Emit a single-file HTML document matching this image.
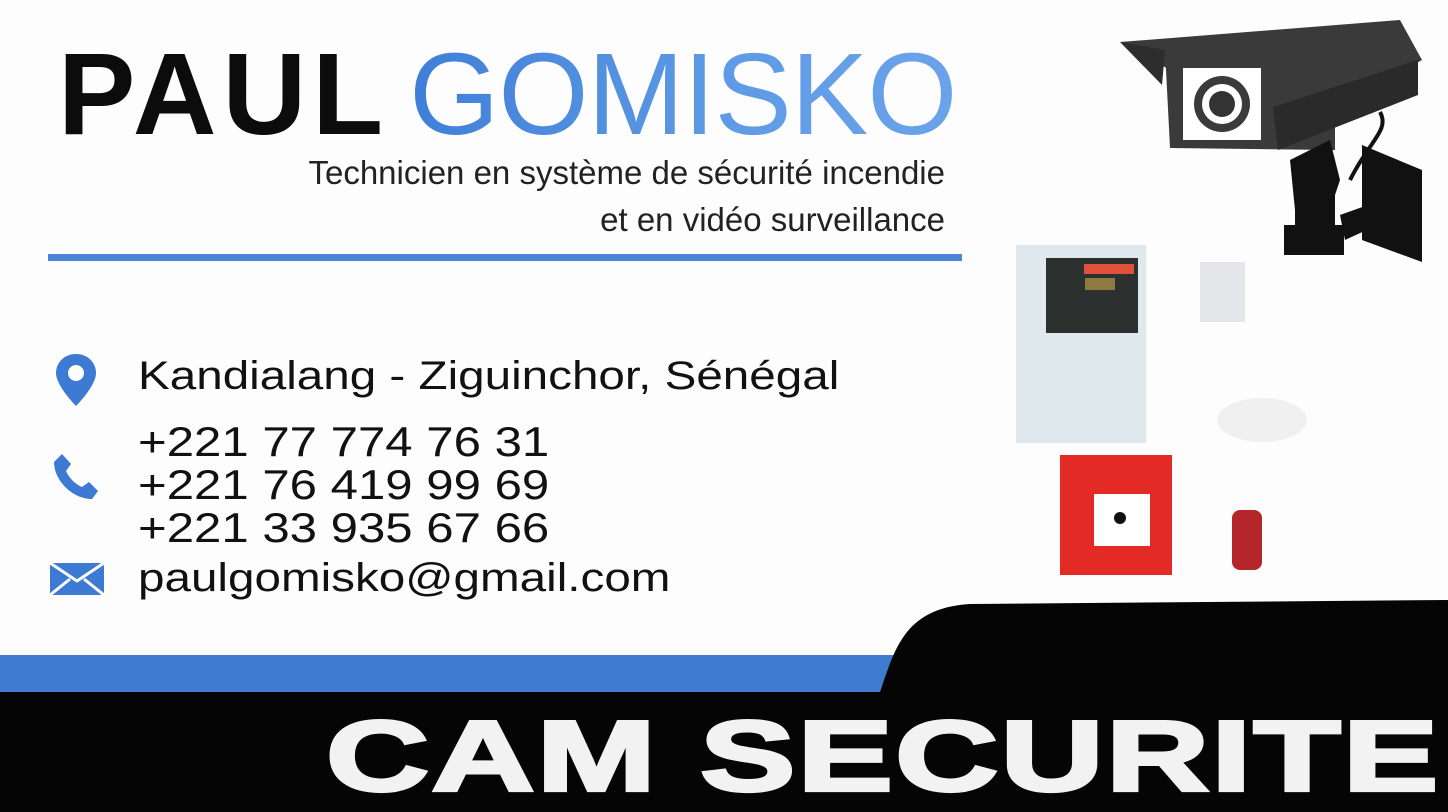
<!DOCTYPE html>
<html><head><meta charset="utf-8"><style>
html,body{margin:0;padding:0}
body{width:1448px;height:812px;position:relative;overflow:hidden;background:#fdfdfd;font-family:"Liberation Sans",sans-serif}
.a{position:absolute;white-space:nowrap}
.name{left:58px;top:36px;font-size:116px;font-weight:bold;color:#0c0c0c;line-height:1}
.name b{letter-spacing:6px}
.name span{font-weight:normal;margin-left:20px;letter-spacing:-1px;background:linear-gradient(90deg,#3f7fd8,#5f9be6 60%,#6aa3ea);-webkit-background-clip:text;color:transparent}
.sub{right:503px;font-size:33px;color:#222;line-height:1}
.c{left:138px;font-size:40px;color:#111;line-height:1;transform:scaleX(1.19);transform-origin:0 0}
</style></head><body>
<div class="a name"><b>PAUL</b><span>GOMISKO</span></div>
<div class="a sub" style="top:156px">Technicien en système de sécurité incendie</div>
<div class="a sub" style="top:203px">et en vidéo surveillance</div>
<div class="a" style="left:48px;top:254px;width:914px;height:7px;background:#4b86d6"></div>

<svg class="a" style="left:52px;top:352px" width="48" height="56" viewBox="0 0 48 56"><path d="M24 2C12 2 4 11 4 21c0 13 20 33 20 33s20-20 20-33C44 11 36 2 24 2z" fill="#3d7ad3"/><circle cx="24" cy="21" r="8" fill="#fff"/></svg>
<div class="a c" style="top:356px">Kandialang - Ziguinchor, Sénégal</div>

<svg class="a" style="left:52px;top:452px" width="48" height="50" viewBox="0 0 48 50"><path d="M10 2l9 10-5 7c3 7 9 13 16 16l7-5 9 9-6 8C20 47 2 28 2 10z" fill="#3d7ad3"/></svg>
<div class="a c" style="top:420px;font-size:42px;line-height:43px;transform:scaleX(1.17)">+221 77 774 76 31<br>+221 76 419 99 69<br>+221 33 935 67 66</div>

<svg class="a" style="left:50px;top:563px" width="54" height="32" viewBox="0 0 54 32"><rect width="54" height="32" fill="#3d7ad3"/><path d="M0 0l27 18L54 0M0 32l20-16M54 32L34 16" stroke="#fff" stroke-width="3" fill="none"/></svg>
<div class="a c" style="top:558px">paulgomisko@gmail.com</div>

<svg class="a" style="left:1000px;top:0" width="448" height="600" viewBox="0 0 448 600">
<path d="M120 42 L400 20 L422 60 L330 110 L170 70 Z" fill="#3a3a3a"/>
<path d="M165 50 L210 48 L335 110 L335 150 L170 148 Z" fill="#3a3a3a"/>
<rect x="183" y="68" width="78" height="72" fill="#fff"/>
<circle cx="222" cy="104" r="28" fill="#3a3a3a"/><circle cx="222" cy="104" r="20" fill="#fff"/><circle cx="222" cy="104" r="13" fill="#333"/>
<path d="M273 107 L418 60 L418 95 L278 150 Z" fill="#2a2a2a"/>
<path d="M120 42 L162 85 L165 50 Z" fill="#2d2d2d"/>
<path d="M290 160 L330 140 L340 180 L330 210 L295 210 Z" fill="#111"/>
<rect x="284" y="225" width="60" height="30" fill="#111"/>
<rect x="295" y="170" width="40" height="60" fill="#111"/>
<path d="M362 145 L422 170 L422 262 L362 240 Z" fill="#111"/>
<path d="M340 215 L410 190 L410 210 L345 240 Z" fill="#111"/>
<path d="M350 180 C370 140 390 130 380 112" stroke="#111" stroke-width="4" fill="none"/>
<rect x="16" y="245" width="130" height="198" fill="#dfe8ec"/>
<rect x="46" y="258" width="92" height="75" fill="#2c3130"/>
<rect x="84" y="264" width="50" height="10" fill="#e0503a"/>
<rect x="85" y="278" width="30" height="12" fill="#8c7a40"/>
<path d="M200 262 h45 v60 h-45z" fill="#e4e6ea"/>
<ellipse cx="262" cy="420" rx="45" ry="22" fill="#f0f0f0"/>
<rect x="60" y="455" width="112" height="120" fill="#e42a25"/>
<rect x="94" y="494" width="56" height="52" fill="#fff"/>
<circle cx="120" cy="518" r="6" fill="#111"/>
<rect x="232" y="510" width="30" height="60" rx="8" fill="#b4262a"/>
</svg>

<div class="a" style="left:0;top:655px;width:960px;height:40px;background:#3f7cd0"></div>
<svg class="a" style="left:0;top:598px" width="1448" height="214" viewBox="0 0 1448 214"><path d="M0 94 L880 94 C895 50 905 10 970 6 L1448 2 L1448 214 L0 214 Z" fill="#050505"/></svg>
<div class="a" style="left:326px;top:706px;font-size:122px;font-weight:bold;color:#f2f2f2;letter-spacing:2px;line-height:1;-webkit-text-stroke:4px #f2f2f2;transform:scale(1.17,0.82);transform-origin:0 0">CAM SECURITE</div>
</body></html>
